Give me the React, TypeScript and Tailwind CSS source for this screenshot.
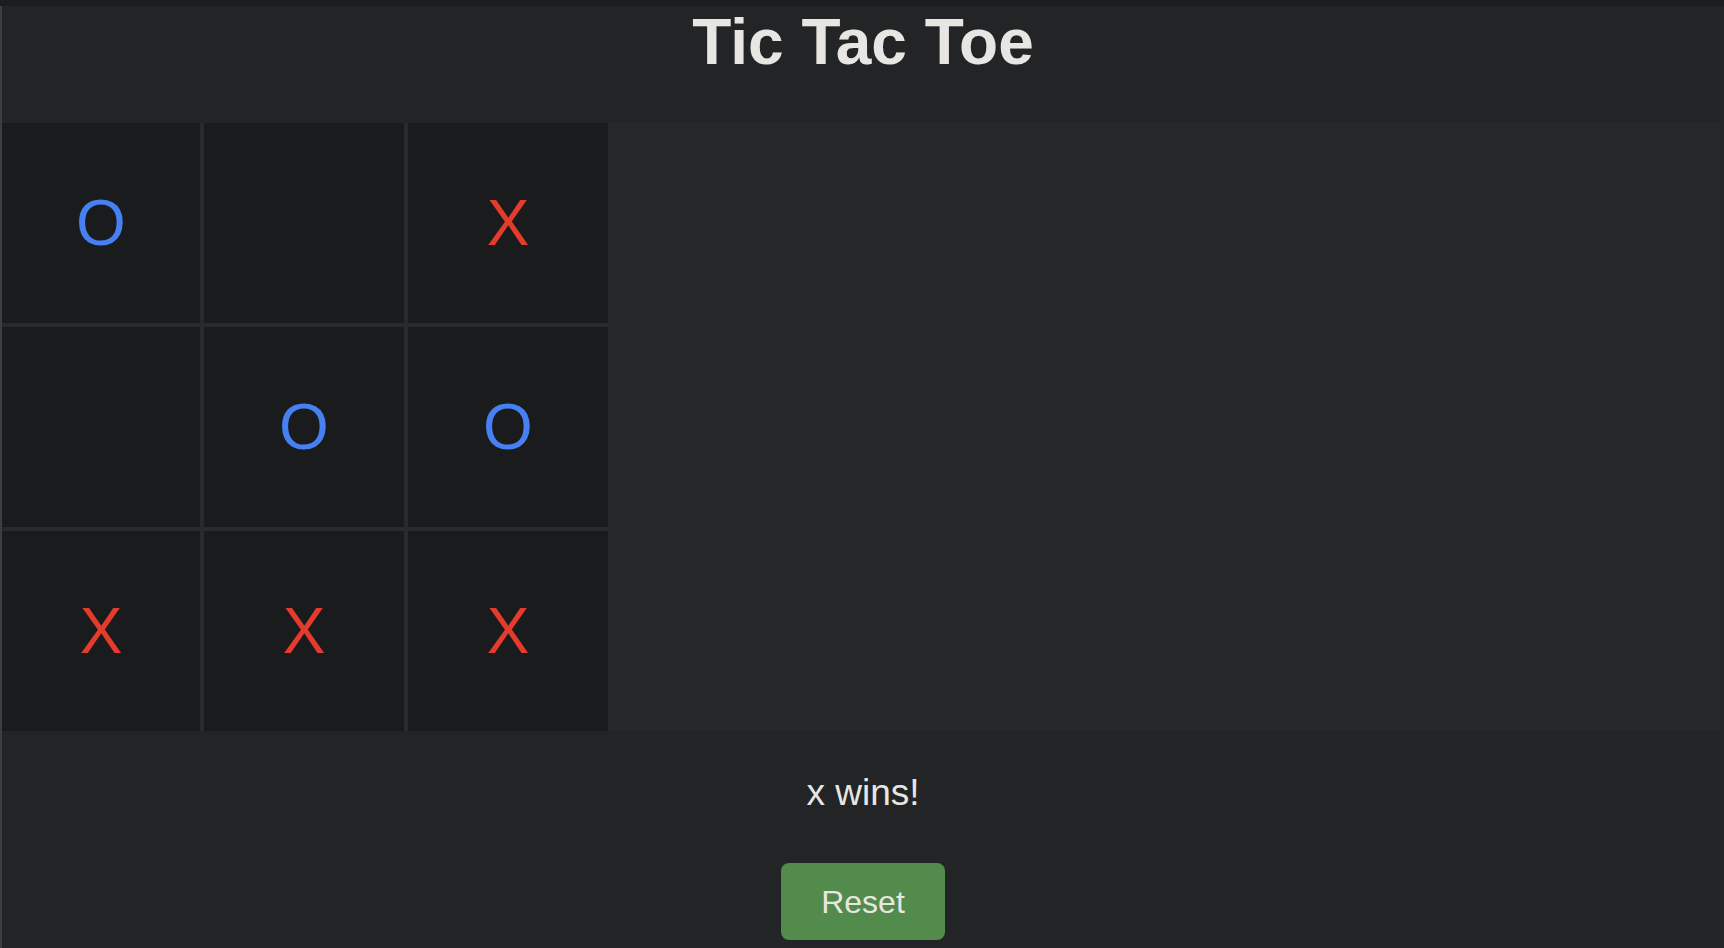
const board: string[] = ['O', '', 'X', '', 'O', 'O', 'X', 'X', 'X'];

function Cell({ value }: { value: string }) {
  return (
    <div className="flex items-center justify-center bg-[#1a1b1d]">
      {value && (
        <span
          className={`text-[64px] leading-none ${value === 'X' ? 'text-[#e53b2d]' : 'text-[#4680f2]'}`}
        >
          {value}
        </span>
      )}
    </div>
  );
}

export default function App() {
  return (
    <div className="w-full h-[948px] flex flex-col bg-[#232426] font-['Liberation_Sans',Arial,sans-serif] text-[#e8e6e3] overflow-hidden">
      <div className="h-[6px] bg-[#1b1c1e]" />
      <div className="flex flex-col flex-1 border-l-2 border-[#3c3e40]">
        <header className="h-[117px] pt-[4px] flex justify-center">
          <h1 className="text-[64px] font-bold leading-none">Tic Tac Toe</h1>
        </header>

        <main className="flex h-[608px]">
          <div className="grid grid-cols-[198px_200px_200px] grid-rows-[200px_200px_200px] gap-[4px] bg-[#282b2d]">
            {board.map((v, i) => (
              <Cell key={i} value={v} />
            ))}
          </div>
          <div className="flex-1 mr-1 bg-[#25292a]" />
        </main>

        <div className="flex flex-col items-center pt-[40px]">
          <p className="text-[37px] leading-[1.2]">x wins!</p>
          <button className="mt-[48px] w-[164px] h-[77px] rounded-lg bg-[#528b4b] text-[32px] text-[#e8e6e3]">
            Reset
          </button>
        </div>
      </div>
    </div>
  );
}
